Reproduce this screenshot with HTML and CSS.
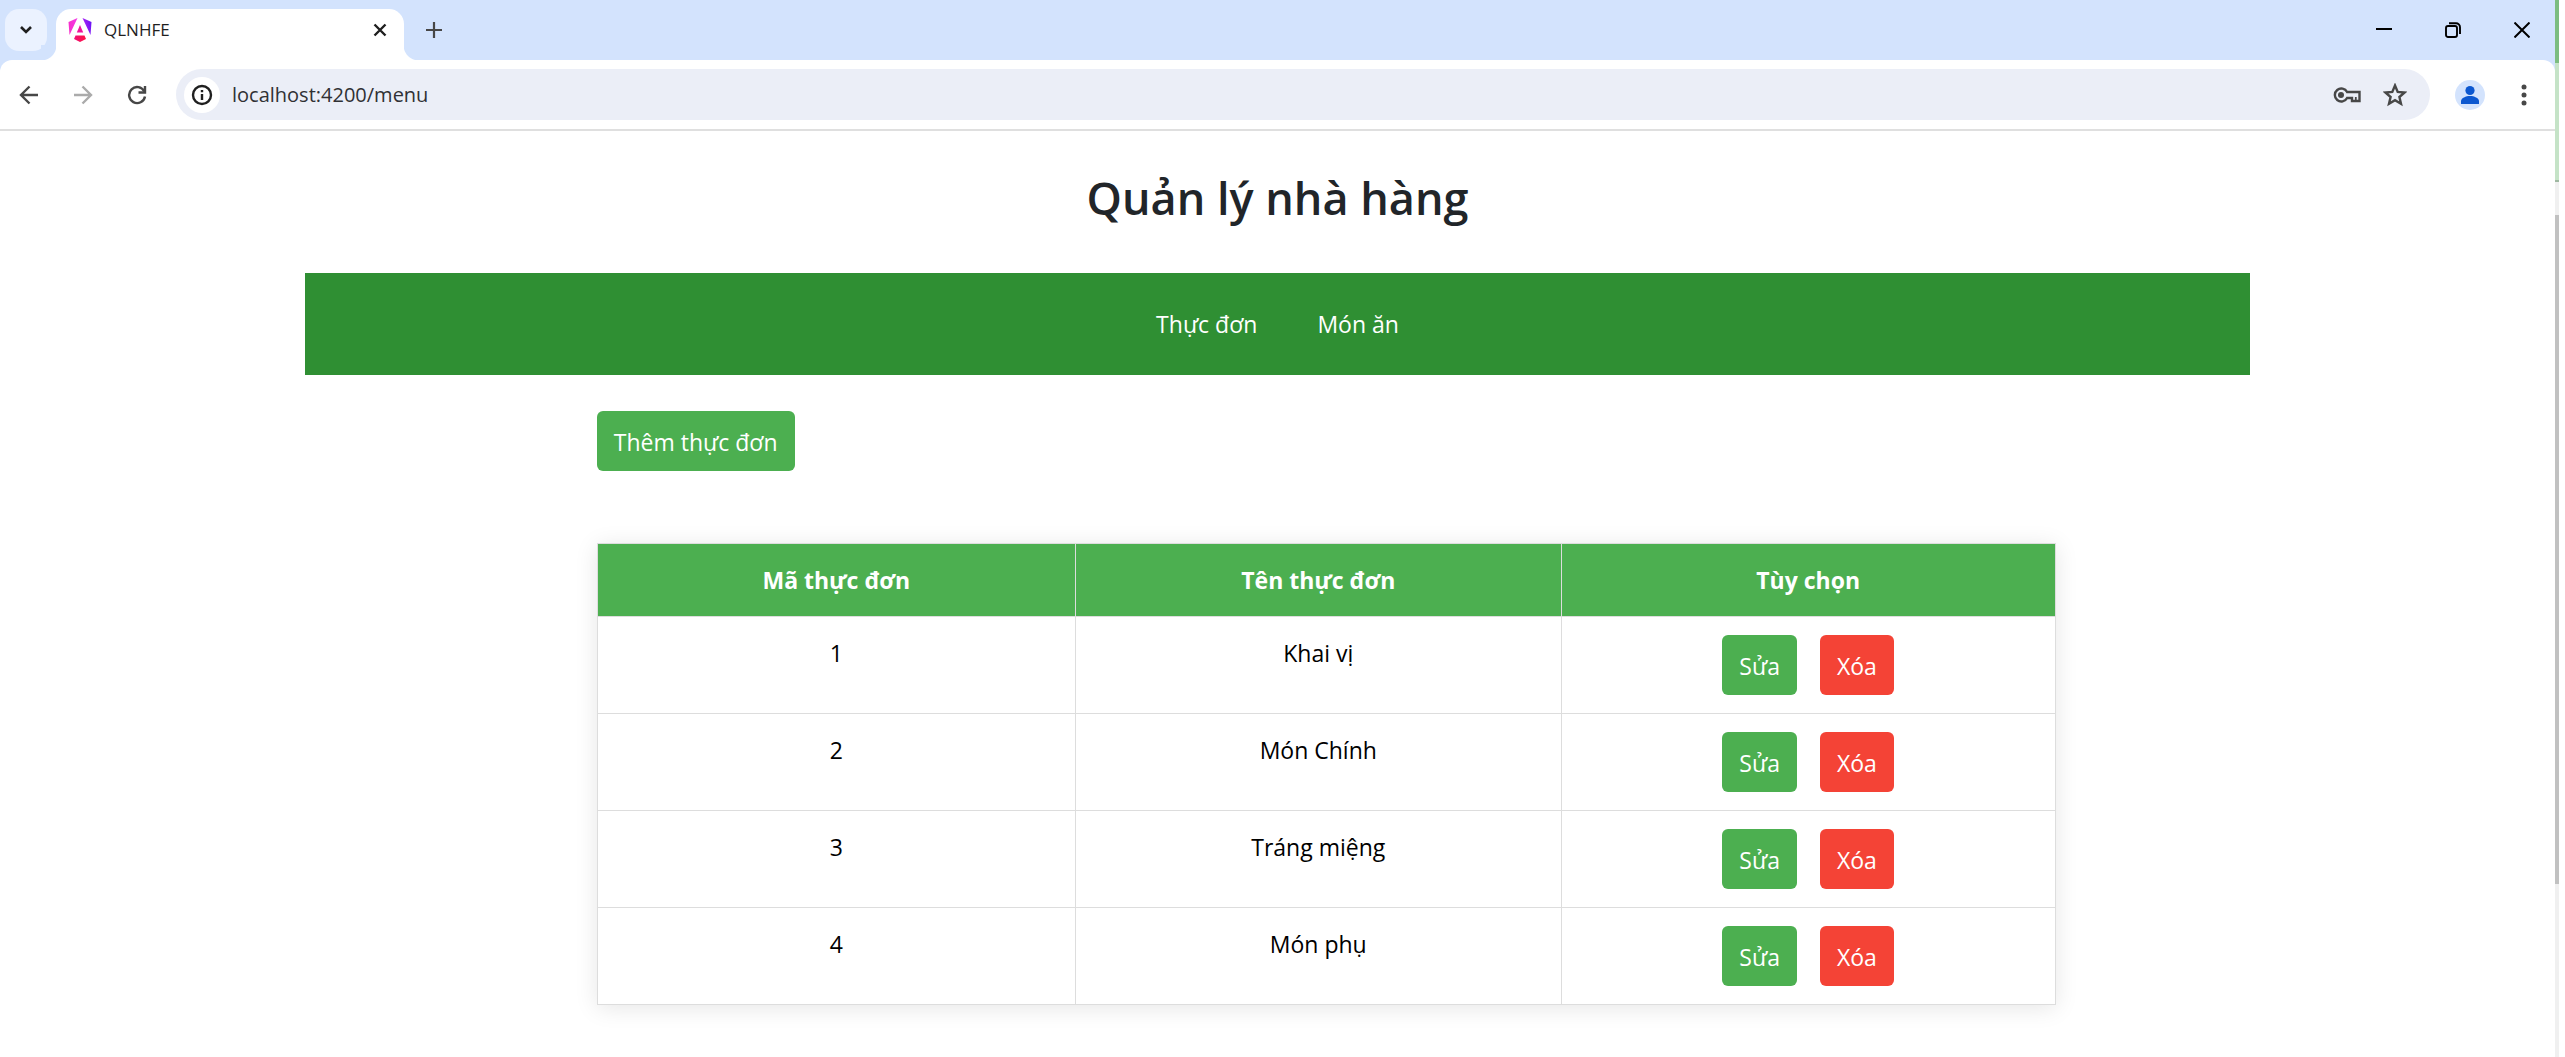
FILE: index.html
```html
<!DOCTYPE html>
<html lang="vi">
<head>
<meta charset="utf-8">
<title>QLNHFE</title>
<link rel="stylesheet" href="styles.css">
</head>
<body>
<div class="screen">
  <div class="window">
    <header class="tabstrip">
      <button class="tab-search" aria-label="Search tabs">
        <svg width="14" height="10" viewBox="0 0 14 10"><path d="M2 2l5 5 5-5" fill="none" stroke="#1f1f1f" stroke-width="2.6"/></svg>
      </button>
      <div class="tab">
        <svg class="favicon" width="24" height="24" viewBox="0 0 24 24">
          <defs><linearGradient id="ng" gradientUnits="userSpaceOnUse" x1="0" y1="12" x2="24" y2="8"><stop offset="0" stop-color="#f62fc8"/><stop offset="0.4" stop-color="#f637e3"/><stop offset="0.7" stop-color="#a020f5"/><stop offset="1" stop-color="#6a14f5"/></linearGradient>
          <linearGradient id="ngr" x1="0" y1="0" x2="1" y2="0"><stop offset="0" stop-color="#f0107a"/><stop offset="1" stop-color="#ff1340"/></linearGradient></defs>
          <path d="M9.500 0L.5 4l1 13zM14.500 0l9 4-1 13z" fill="url(#ng)"/>
          <path d="M12 7l3.200 7.500H8.800z" fill="#f0149c"/>
          <path d="M7.500 17.500h9l1.500 3.500-6 3-6-3z" fill="url(#ngr)"/>
        </svg>
        <span class="tab-title">QLNHFE</span>
        <button class="plain" aria-label="Close tab">
          <svg width="14" height="14" viewBox="0 0 14 14"><path d="M1.500 1.500l11 11m0-11l-11 11" stroke="#1f1f1f" stroke-width="2.400"/></svg>
        </button>
      </div>
      <button class="plain new-tab" aria-label="New tab">
        <svg width="16" height="16" viewBox="0 0 16 16"><path d="M8 0v16M0 8h16" stroke="#474747" stroke-width="2.200"/></svg>
      </button>
      <div class="window-buttons">
        <button class="plain" aria-label="Minimize"><svg width="16" height="16" viewBox="0 0 16 16"><path d="M0 7h16" stroke="#000" stroke-width="2"/></svg></button>
        <button class="plain" aria-label="Restore"><svg width="16" height="16" viewBox="0 0 16 16" fill="none" stroke="#000" stroke-width="1.900"><rect x="1" y="4" width="11" height="11" rx="2"/><path d="M4 1.200h7a4 4 0 0 1 4 4V12"/></svg></button>
        <button class="plain" aria-label="Close"><svg width="16" height="16" viewBox="0 0 16 16"><path d="M.5.5l15 15m0-15l-15 15" stroke="#000" stroke-width="2"/></svg></button>
      </div>
    </header>
    <div class="toolbar">
      <button class="plain tool" aria-label="Back"><svg width="20" height="20" viewBox="0 0 20 20" fill="none" stroke="#474747" stroke-width="2.400"><path d="M19 10H2M10.500 1.500L2 10l8.500 8.500"/></svg></button>
      <button class="plain tool" aria-label="Forward" disabled><svg width="20" height="20" viewBox="0 0 20 20" fill="none" stroke="#ababab" stroke-width="2.400"><path d="M1 10h17M9.500 1.500L18 10l-8.500 8.500"/></svg></button>
      <button class="plain tool" aria-label="Reload"><svg width="20" height="20" viewBox="0 0 20 20" fill="none" stroke="#474747" stroke-width="2.400"><path d="M17.300 6.500A8 8 0 1 0 18 11.500"/><path d="M18 1v6.500h-6.500"/></svg></button>
      <div class="omnibox">
        <button class="site-info" aria-label="Site information"><svg width="22" height="22" viewBox="0 0 22 22"><circle cx="11" cy="11" r="9" fill="none" stroke="#1f1f1f" stroke-width="2.400"/><path d="M11 10v6M11 6v2.200" stroke="#1f1f1f" stroke-width="2.400"/></svg></button>
        <input class="address" type="text" aria-label="Address" value="localhost:4200/menu">
        <button class="plain" aria-label="Passwords"><svg width="28" height="18" viewBox="0 0 28 18" fill="none" stroke="#474747" stroke-width="2.400"><path d="M14.100 6A6.500 6.500 0 1 0 14.100 12H19v3h7.500V6z"/><circle cx="8" cy="9" r="3" fill="#474747" stroke="none"/><path d="M22.800 11v4" stroke-width="1.800"/></svg></button>
        <button class="plain" aria-label="Bookmark"><svg width="24" height="24" viewBox="0 0 24 24" fill="none" stroke="#474747" stroke-width="2.400"><path d="M12 2.500l2.700 6.400 6.900.6-5.200 4.500 1.600 6.800-6-3.600-6 3.600 1.600-6.800-5.200-4.500 6.900-.6z"/></svg></button>
      </div>
      <button class="plain profile" aria-label="Profile"><svg width="30" height="30" viewBox="0 0 30 30"><circle cx="15" cy="15" r="15" fill="#d3e3fd"/><circle cx="15" cy="10.500" r="4.600" fill="#0b57d0"/><path d="M6 24v-3c0-3 5-5 9-5s9 2 9 5v3z" fill="#0b57d0"/></svg></button>
      <button class="plain" aria-label="Menu"><svg width="6" height="22" viewBox="0 0 6 22" fill="#474747"><circle cx="3" cy="3" r="2.500"/><circle cx="3" cy="11" r="2.500"/><circle cx="3" cy="19" r="2.500"/></svg></button>
    </div>
    <main class="page">
      <h1>Quản lý nhà hàng</h1>
      <nav class="nav">
        <a href="#menu">Thực đơn</a>
        <a href="#dish">Món ăn</a>
      </nav>
      <section class="content">
        <button class="btn">Thêm thực đơn</button>
        <table class="menu-table">
          <colgroup><col class="col-id"><col class="col-name"><col class="col-actions"></colgroup>
          <thead><tr><th>Mã thực đơn</th><th>Tên thực đơn</th><th>Tùy chọn</th></tr></thead>
          <tbody>
            <tr><td>1</td><td>Khai vị</td><td><div class="actions"><button class="btn">Sửa</button><button class="btn danger">Xóa</button></div></td></tr>
            <tr><td>2</td><td>Món Chính</td><td><div class="actions"><button class="btn">Sửa</button><button class="btn danger">Xóa</button></div></td></tr>
            <tr><td>3</td><td>Tráng miệng</td><td><div class="actions"><button class="btn">Sửa</button><button class="btn danger">Xóa</button></div></td></tr>
            <tr><td>4</td><td>Món phụ</td><td><div class="actions"><button class="btn">Sửa</button><button class="btn danger">Xóa</button></div></td></tr>
          </tbody>
        </table>
      </section>
    </main>
  </div>
  <div class="backdrop"><div class="backdrop-dark"></div><div class="backdrop-light"></div><div class="backdrop-gap"></div><div class="backdrop-thumb"></div></div>
</div>
</body>
</html>
```
FILE: styles.css
```css
* { box-sizing: border-box; }
body {
  margin: 0;
  background: #fff;
  color: #000;
  font: 23px/36px "Open Sans", "Noto Sans", sans-serif;
}
button, input { font: inherit; color: inherit; }
svg { display: block; }

.screen { display: flex; min-height: 100vh; padding-right: 6px; }
.window { flex: 1; min-width: 0; }
.plain { padding: 0; border: 0; background: none; }

/* tab strip; the toolbar's rounded corners overlap its last 12px */
.tabstrip {
  display: flex;
  align-items: center;
  height: 72px;
  margin-bottom: -12px;
  padding: 0 19px 12px 5px;
  background: #d3e3fd;
}
.tab-search {
  display: grid;
  place-items: center;
  width: 42px;
  height: 42px;
  padding: 0;
  border: 0;
  border-radius: 14px;
  background: #ebf2ff;
}
.tab {
  position: relative;
  display: flex;
  align-items: center;
  gap: 12px;
  align-self: flex-end;
  width: 348px;
  height: 51px;
  margin-left: 9px;
  padding: 0 17px 9px 12px;
  border-radius: 15px 15px 0 0;
  background: #fff;
}
.tab::before, .tab::after {
  content: "";
  position: absolute;
  bottom: 0;
  width: 15px;
  height: 15px;
}
.tab::before { right: 100%; background: radial-gradient(circle at 0 0, #d3e3fd 15px, #fff 16px); }
.tab::after { left: 100%; background: radial-gradient(circle at 100% 0, #d3e3fd 15px, #fff 16px); }
.tab-title { flex: 1; color: #1f1f1f; font-size: 17px; line-height: 24px; }
.new-tab { margin-left: 22px; }
.window-buttons { display: flex; gap: 53px; margin-left: auto; margin-right: 6px; }

/* toolbar */
.toolbar {
  position: relative;
  display: flex;
  align-items: center;
  height: 71px;
  padding: 0 28px 0 19px;
  border-bottom: 2px solid #dfdfdf;
  border-radius: 12px 12px 0 0;
  background: #fff;
}
.tool { margin-right: 34px; }
.omnibox {
  flex: 1;
  display: flex;
  align-items: center;
  gap: 22px;
  height: 51px;
  margin-left: -5px;
  padding: 0 23px 0 8px;
  border-radius: 26px;
  background: #ebeef7;
}
.site-info {
  display: grid;
  place-items: center;
  width: 36px;
  height: 36px;
  padding: 0;
  border: 0;
  border-radius: 50%;
  background: #fff;
}
.address {
  flex: 1;
  min-width: 0;
  margin-left: -10px;
  padding: 0;
  border: 0;
  background: none;
  color: #303134;
  font-size: 20px;
  line-height: 30px;
}
.profile { margin: 0 36px 0 25px; }

/* page */
.page { max-width: 1945px; margin: 0 auto; padding-top: 36px; }
h1 {
  margin: 0 0 45px;
  color: #212529;
  font-size: 45px;
  font-weight: 600;
  line-height: 61px;
  text-align: center;
}
.nav {
  display: flex;
  justify-content: center;
  gap: 60px;
  padding: 33px 0;
  background: #2f8f33;
}
.nav a { color: #fff; text-decoration: none; }
.content { width: 75%; margin: 36px 0 0 15%; }
.btn {
  height: 60px;
  padding: 2px 17px 0;
  border: 0;
  border-radius: 6px;
  background: #4caf50;
  color: #fff;
}
.danger { background: #f44336; }
.menu-table {
  width: 100%;
  margin-top: 72px;
  border-collapse: collapse;
  table-layout: fixed;
  text-align: center;
  box-shadow: 0 3px 22px rgba(0, 0, 0, .1);
}
.col-id { width: 478px; }
.col-name { width: 486px; }
th, td { padding: 18px; border: 1px solid #ddd; vertical-align: top; }
th { background: #4caf50; color: #fff; font-weight: 700; }
tbody tr { background: #fff; }
.actions { display: flex; justify-content: center; gap: 23px; }

/* sliver of the window behind */
.backdrop { display: flex; flex-direction: column; width: 4px; background: #f0f0f0; }
.backdrop-dark { height: 63px; background: #7cbd80; }
.backdrop-light { height: 119px; border-bottom: 2px solid #9fb8a1; background: #c5e3c7; }
.backdrop-gap { height: 33px; }
.backdrop-thumb { height: 669px; background: #c1c1c1; }
```
